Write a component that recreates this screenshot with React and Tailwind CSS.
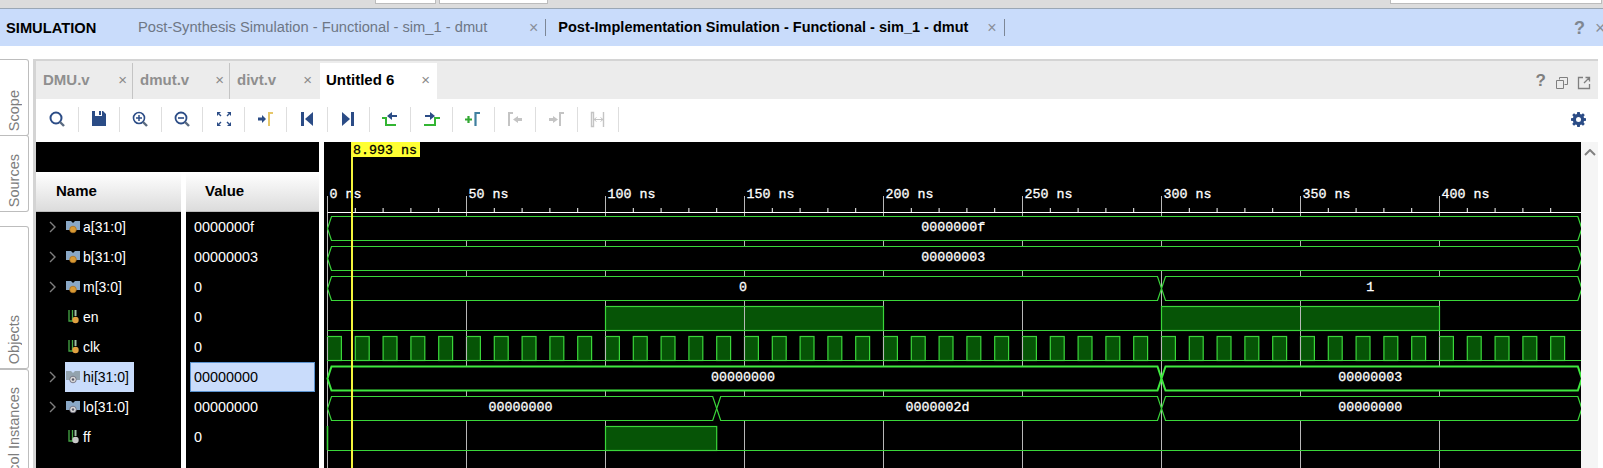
import React from "react";

const NAVY = "#2b4c86";
const GREEN = "#3ad63a";
const DARK = "#065406";

const Ic = ({ children }) => (
  <svg width="20" height="20" viewBox="0 0 20 20" fill="none">
    {children}
  </svg>
);

const toolbarIcons = [
  <Ic>
    <circle cx="9" cy="9" r="5.5" stroke={NAVY} strokeWidth="2" />
    <path d="M13 13l4 4" stroke="#5a6a80" strokeWidth="2.4" />
  </Ic>,
  <Ic>
    <path d="M3 2h3v5h7V2h1l3 3v12H3z" fill={NAVY} />
    <rect x="10" y="2" width="2" height="4" fill={NAVY} />
  </Ic>,
  <Ic>
    <circle cx="9" cy="9" r="5.5" stroke={NAVY} strokeWidth="1.6" />
    <path d="M6 9h6M9 6v6" stroke={NAVY} strokeWidth="1.5" />
    <path d="M13 13l4 4" stroke="#5a6a80" strokeWidth="2.4" />
  </Ic>,
  <Ic>
    <circle cx="9" cy="9" r="5.5" stroke={NAVY} strokeWidth="1.8" />
    <path d="M6 9h6" stroke={NAVY} strokeWidth="1.6" />
    <path d="M13 13l4 4" stroke="#5a6a80" strokeWidth="2.4" />
  </Ic>,
  <Ic>
    <path d="M3 3h4L3 7zM17 3h-4l4 4zM3 17h4l-4-4zM17 17h-4l4-4z" fill={NAVY} />
    <path d="M7 7L5 5M13 7l2-2M7 13l-2 2M13 13l2 2" stroke={NAVY} strokeWidth="1.4" />
  </Ic>,
  <Ic>
    <path d="M3 8.500h4V6l4 4-4 4v-2.500H3z" fill={NAVY} />
    <path d="M14 17V4h4" stroke="#e6c76a" strokeWidth="2" />
  </Ic>,
  <Ic>
    <rect x="4" y="3" width="3" height="14" fill={NAVY} />
    <path d="M16 3v14l-8-7z" fill={NAVY} />
  </Ic>,
  <Ic>
    <rect x="13" y="3" width="3" height="14" fill={NAVY} />
    <path d="M4 3v14l8-7z" fill={NAVY} />
  </Ic>,
  <Ic>
    <path d="M2 9h4v7h10" stroke="#33b533" strokeWidth="2" />
    <path d="M17 6h-5V3L7 7l5 4V8h5z" fill={NAVY} />
  </Ic>,
  <Ic>
    <path d="M2 16h11V9h5" stroke="#33b533" strokeWidth="2" />
    <path d="M3 6h5V3l5 4-5 4V8H3z" fill={NAVY} />
  </Ic>,
  <Ic>
    <path d="M2 10.500h7M5.500 7v7" stroke="#33a833" strokeWidth="2.2" />
    <path d="M12.500 17V4H17" stroke="#3f7f9f" strokeWidth="2.2" />
  </Ic>,
  <Ic>
    <path d="M4 17V4h4" stroke="#c4c4c4" strokeWidth="2" />
    <path d="M17 9h-4V7l-5 3.500 5 3.500v-2h4z" fill="#c4c4c4" />
  </Ic>,
  <Ic>
    <path d="M14 17V4h4" stroke="#c4c4c4" strokeWidth="2" />
    <path d="M3 9h4V7l5 3.500L7 14v-2H3z" fill="#c4c4c4" />
  </Ic>,
  <Ic>
    <path d="M3.500 3.500h2v14h-2zM15.500 3v15" stroke="#c4c4c4" strokeWidth="1.400" />
    <path d="M6 10.500h9M6 10.500l2.500-2M6 10.500l2.500 2M15 10.500l-2.500-2M15 10.500l-2.500 2" stroke="#c4c4c4" />
  </Ic>,
];

const BusIcon = ({ gray, dim }) => (
  <svg width="14" height="13" viewBox="0 0 14 13" className="shrink-0">
    <path d="M0 0h5l2 2 2-2h5v9H0z" fill={dim ? "#93a3ae" : "#8aa8c6"} />
    <circle cx="7" cy="8.500" r="3.300" fill={gray ? "#d8d8d8" : "#d99a35"} stroke={gray ? "#667" : "#a8701f"} strokeWidth="0.800" />
    {gray && <circle cx="7" cy="8.500" r="1.200" fill="#556" />}
  </svg>
);

const BitIcon = ({ gray }) => (
  <svg width="14" height="16" viewBox="0 0 14 16" className="shrink-0">
    <path d="M3 1v11h3.500V1" stroke="#46a846" strokeWidth="1.300" fill="none" />
    <path d="M9.500 1v6" stroke="#9dbfa5" strokeWidth="2" fill="none" />
    <circle cx="9.500" cy="11" r="3.200" fill={gray ? "#c8c8c8" : "#e0a040"} />
  </svg>
);

const rows = [
  { name: "a[31:0]", value: "0000000f", bus: true },
  { name: "b[31:0]", value: "00000003", bus: true },
  { name: "m[3:0]", value: "0", bus: true },
  { name: "en", value: "0" },
  { name: "clk", value: "0" },
  { name: "hi[31:0]", value: "00000000", bus: true, gray: true, selected: true },
  { name: "lo[31:0]", value: "00000000", bus: true, gray: true },
  { name: "ff", value: "0", bitGray: true },
];

const SideTab = ({ label, className }) => (
  <div className={`flex shrink-0 flex-col items-center justify-end rounded-r-[3px] border-y border-r border-[#bdbdbd] pb-[4px] ${className}`}>
    <span className="whitespace-nowrap text-[14.500px] leading-[18px] text-[#7d7d7d] [writing-mode:vertical-rl] rotate-180">
      {label}
    </span>
  </div>
);

const X0 = 3.5; // svg starts at page x = 324
const PX = 2.78; // px per ns
const t = (ns) => X0 + ns * PX;
const END = t(451.2);

const monoFont = { fontFamily: '"Liberation Mono", monospace', fontSize: 13.33 };

// bus row: segments [from, to, label]
const Bus = ({ top, segs, thick }) => {
  const mid = top + 12;
  const w = thick ? 2 : 1.2;
  return (
    <g>
      {segs.map(([a, b, label]) => {
        const xa = t(a);
        const xb = b === null ? END : t(b);
        return (
          <g key={a}>
            <polygon
              points={`${xa},${mid} ${xa + 4},${top} ${xb - 4},${top} ${xb},${mid} ${xb - 4},${top + 24} ${xa + 4},${top + 24}`}
              fill="#000"
              stroke={thick ? "#3fe83f" : GREEN}
              strokeWidth={w}
            />
            <text
              x={(xa + xb) / 2 - 1.5}
              y={mid + 2}
              fill="#fff"
              stroke="#fff"
              strokeWidth="0.3"
              textAnchor="middle"
              style={monoFont}
            >
              {label}
            </text>
          </g>
        );
      })}
    </g>
  );
};

const Pulse = ({ top, from, to }) => (
  <rect x={t(from)} y={top} width={t(to) - t(from)} height={24} fill={DARK} stroke={GREEN} strokeWidth="1.200" />
);

const Waves = () => {
  const majors = [0, 50, 100, 150, 200, 250, 300, 350, 400];
  const minors = [];
  for (let i = 0; i * 10 < 451; i++) if (i % 5 !== 0) minors.push(i * 10);
  const clk = [];
  for (let i = 0; i < 45; i++) clk.push(i * 10);
  return (
    <svg width="1257" height="326" viewBox="0 0 1257 326" className="block bg-black">
      {/* grid */}
      {majors.map((n) => (
        <line key={n} x1={t(n)} x2={t(n)} y1={54} y2={326} stroke="#b8b8b8" />
      ))}
      {/* ruler */}
      <line x1={t(0)} x2={END} y1={70.500} y2={70.500} stroke="#fff" />
      <line x1={END} x2={END} y1={54} y2={70} stroke="#fff" />
      {minors.map((n) => (
        <line key={n} x1={t(n)} x2={t(n)} y1={66} y2={70} stroke="#fff" />
      ))}
      {majors.map((n) => (
        <text key={n} x={t(n) + 2} y={56} fill="#fff" stroke="#fff" strokeWidth="0.3" style={monoFont}>
          {n} ns
        </text>
      ))}

      <Bus top={74.500} segs={[[0, null, "0000000f"]]} />
      <Bus top={104.500} segs={[[0, null, "00000003"]]} />
      <Bus top={134.500} segs={[[0, 300, "0"], [300, null, "1"]]} />

      {/* en */}
      <line x1={t(0)} x2={END} y1={188.500} y2={188.500} stroke={GREEN} strokeWidth="1.200" />
      <Pulse top={164.500} from={100} to={200} />
      <Pulse top={164.500} from={300} to={400} />
      {[150, 350].map((n) => (
        <line key={n} x1={t(n)} x2={t(n)} y1={165} y2={188} stroke="#b8b8b8" />
      ))}

      {/* clk */}
      <line x1={t(0)} x2={END} y1={218.500} y2={218.500} stroke={GREEN} strokeWidth="1.200" />
      {clk.map((n) => (
        <Pulse key={n} top={194.500} from={n} to={n + 5} />
      ))}
      {majors.map((n) => (
        <line key={n} x1={t(n)} x2={t(n)} y1={195} y2={218} stroke="#b8b8b8" />
      ))}

      <Bus top={224.500} thick segs={[[0, 300, "00000000"], [300, null, "00000003"]]} />
      <Bus top={254.500} segs={[[0, 140, "00000000"], [140, 300, "0000002d"], [300, null, "00000000"]]} />

      {/* ff */}
      <line x1={t(0)} x2={END} y1={308.500} y2={308.500} stroke={GREEN} strokeWidth="1.200" />
      <line x1={t(0)} x2={t(0)} y1={284} y2={308} stroke={GREEN} strokeWidth="1.600" />
      <Pulse top={284.500} from={100} to={140} />

      {/* cursor */}
      <line x1={28} x2={28} y1={0} y2={326} stroke="#f4f43c" strokeWidth="2" />
      <rect x={28} y={0} width={68} height={15} fill="#ffff33" />
      <text x={29} y={12} fill="#000" stroke="#000" strokeWidth="0.3" style={monoFont}>
        8.993 ns
      </text>
    </svg>
  );
};

const App = () => {
  return (
    <div className="h-[468px] w-[1603px] overflow-hidden bg-white font-['Liberation_Sans',Arial,sans-serif] text-[14px]">
      {/* window strip */}
      <div className="flex h-[9px] gap-[3px] border-b border-[#9aa7b5] bg-[#dcdcdc]">
        <div className="ml-[375px] h-[4px] w-[61px] border border-t-0 border-[#bcbcbc] bg-white" />
        <div className="h-[4px] w-[109px] border border-t-0 border-[#bcbcbc] bg-white" />
        <div className="ml-auto mr-px h-[4px] w-[212px] border border-t-0 border-[#bcbcbc] bg-white" />
      </div>

      {/* simulation header */}
      <div className="flex h-[37px] items-center bg-[#c9dcfb] text-[14.700px]">
        <span className="ml-[6px] w-[132px] pt-[2px] font-bold text-black">SIMULATION</span>
        <span className="w-[391px] whitespace-nowrap text-[#6e7785]">Post-Synthesis Simulation - Functional - sim_1 - dmut</span>
        <span className="text-[16px] leading-none text-[#8a8f99]">×</span>
        <span className="ml-[7px] h-[17px] w-px bg-[#7d8796]" />
        <span className="ml-[12px] w-[429px] whitespace-nowrap text-[14.500px] font-bold text-black">Post-Implementation Simulation - Functional - sim_1 - dmut</span>
        <span className="text-[16px] leading-none text-[#8a8f99]">×</span>
        <span className="ml-[7px] h-[17px] w-px bg-[#7d8796]" />
        <span className="ml-auto text-[18px] font-bold leading-none text-[#7f8791]">?</span>
        <span className="ml-[10px] w-[8px] overflow-hidden text-[18px] leading-none text-[#8a8f99]">×</span>
      </div>

      <div className="mt-[13px] flex">
        {/* side tabs */}
        <div className="flex h-[409px] w-[29px] shrink-0 flex-col">
          <SideTab label="Scope" className="h-[77px]" />
          <SideTab label="Sources" className="-mt-px h-[77px]" />
          <SideTab label="Objects" className="mt-[14px] h-[143px]" />
          <SideTab label="Protocol Instances" className="h-[133px] !justify-start pt-[17px]" />
        </div>

        {/* main panel */}
        <div className="ml-[4px] h-[409px] w-[1565px] border-t-2 border-l-[3px] border-[#d4d4d4]">
          {/* editor tabs */}
          <div className="flex h-[38px] items-end bg-[#ececec] pt-[2px] text-[15px]">
            <div className="flex h-[36px] w-[97px] items-center border-r border-[#c4c4c4] pb-[2px] pl-[7px] font-bold text-[#8f8f8f]">
              DMU.v
              <span className="ml-auto mr-[5px] text-[15px] font-normal text-[#8a8a8a]">×</span>
            </div>
            <div className="flex h-[36px] w-[97px] items-center border-r border-[#c4c4c4] pb-[2px] pl-[7px] font-bold text-[#8f8f8f]">
              dmut.v
              <span className="ml-auto mr-[5px] text-[15px] font-normal text-[#8a8a8a]">×</span>
            </div>
            <div className="flex h-[36px] w-[90px] items-center pb-[2px] pl-[7px] font-bold text-[#8f8f8f]">
              divt.v
              <span className="ml-auto mr-[8px] text-[15px] font-normal text-[#8a8a8a]">×</span>
            </div>
            <div className="flex h-[36px] w-[117px] items-center bg-white pb-[2px] pl-[6px] font-bold text-black">
              Untitled 6
              <span className="ml-auto mr-[7px] text-[15px] font-normal text-[#8a8a8a]">×</span>
            </div>
            <span className="ml-auto mb-[6px] text-[17px] font-bold text-[#7f7f7f]">?</span>
            <svg width="14" height="14" viewBox="0 0 14 14" fill="none" className="ml-[9px] mb-[9px]" stroke="#7f7f7f">
              <path d="M4.500 3.500V1.500h8v7h-3M1.500 4.500h7v8h-7z" />
            </svg>
            <svg width="14" height="14" viewBox="0 0 14 14" fill="none" className="ml-[8px] mb-[9px] mr-[7px]" stroke="#7f7f7f" strokeWidth="1.300">
              <path d="M6 1.500H1.500v11h11V8M7 7l5.500-5.500M8.500 1.500h4v4" />
            </svg>
          </div>

          {/* toolbar */}
          <div className="flex h-[40px] items-center bg-white pl-[1px]">
            {toolbarIcons.map((icon, i) => (
              <div key={i} className="flex h-[25px] w-[41.600px] items-center justify-center border-r border-[#dedede]">
                {icon}
              </div>
            ))}
            <svg width="15" height="15" viewBox="0 0 24 24" className="ml-auto mr-[12px]" fill={NAVY}>
              <path
                fillRule="evenodd"
                d="M10 0h4l.6 3.200 1.900.8L19.200 2.100 22 4.900l-1.900 2.700.8 1.900L24 10v4l-3.100.5-.8 1.900 1.900 2.700-2.800 2.800-2.700-1.900-1.900.8L14 24h-4l-.6-3.200-1.900-.8-2.700 1.900L2 19.100l1.900-2.700-.8-1.900L0 14v-4l3.100-.5.8-1.900L2 4.900l2.800-2.800 2.700 1.900 1.900-.8zM12 8a4 4 0 1 0 0 8 4 4 0 0 0 0-8z"
              />
            </svg>
          </div>

          <div className="mt-[3px] flex bg-white">
            {/* names and values */}
            <div className="w-[283px] shrink-0">
              <div className="h-[30px] bg-black" />
              <div className="flex h-[40px] text-[15px] font-bold text-black">
                <div className="flex w-[145px] items-center border-b border-[#bdbdbd] bg-gradient-to-b from-white to-[#dcdcdc] pl-[20px]">Name</div>
                <div className="ml-[5px] flex flex-1 items-center border-b border-[#bdbdbd] bg-gradient-to-b from-white to-[#dcdcdc] pl-[19px]">Value</div>
              </div>
              {rows.map((r) => (
                <div key={r.name} className="flex h-[30px]">
                  <div className="flex w-[145px] items-center bg-black">
                    <span className="ml-[13px] w-[12px] shrink-0">
                      {r.bus && (
                        <svg width="8" height="12" viewBox="0 0 8 12" fill="none" stroke="#7f7f7f" strokeWidth="1.400" className="block">
                          <path d="M1 1l5 5-5 5" />
                        </svg>
                      )}
                    </span>
                    <div className={`ml-[4px] flex h-[30px] items-center pl-[1px] pr-[5px] ${r.selected ? "bg-[#c9dcfb] text-black" : "text-white"}`}>
                      {r.bus ? <BusIcon gray={r.gray} dim={r.selected} /> : <BitIcon gray={r.bitGray} />}
                      <span className="ml-[3px]">{r.name}</span>
                    </div>
                  </div>
                  <div className="ml-[5px] flex flex-1 items-center bg-black px-[4px] text-[14.400px]">
                    <div className={`flex h-[30px] flex-1 items-center pt-px ${r.selected ? "border border-[#5b93cf] bg-[#c9dcfb] pl-[3px] text-black" : "pl-[4px] text-white"}`}>
                      {r.value}
                    </div>
                  </div>
                </div>
              ))}
              <div className="flex h-[30px]">
                <div className="w-[145px] bg-black" />
                <div className="ml-[5px] flex-1 bg-black" />
              </div>
            </div>

            {/* waveform */}
            <div className="ml-[5px] shrink-0">
              <Waves />
            </div>

            {/* scrollbar */}
            <div className="flex h-[326px] w-[17px] shrink-0 justify-center bg-[#f5f5f5] pt-[7px]">
              <svg width="12" height="7" viewBox="0 0 12 7" fill="none" stroke="#808080" strokeWidth="2">
                <path d="M1 6l5-5 5 5" />
              </svg>
            </div>
          </div>
        </div>
      </div>
    </div>
  );
};

export default App;
